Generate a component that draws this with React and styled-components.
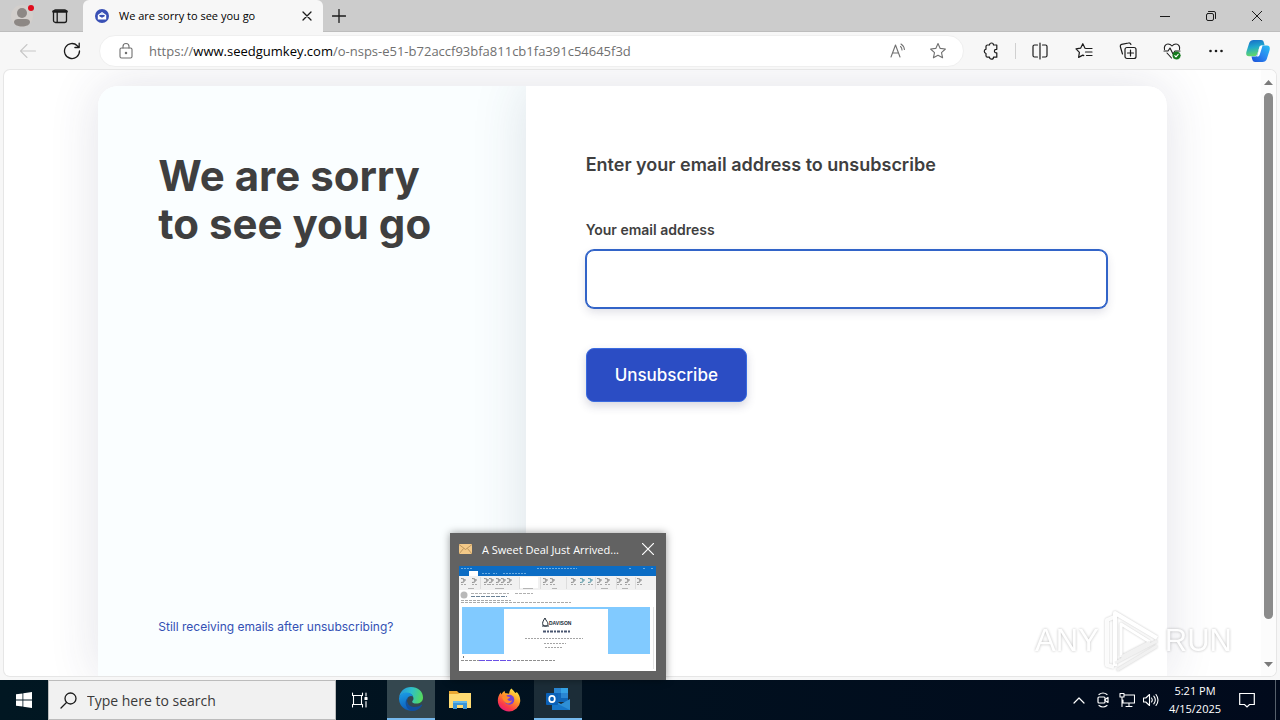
import React, { useState } from 'react';
import styled, { createGlobalStyle } from 'styled-components';

const GlobalStyle = createGlobalStyle`
  * {
    box-sizing: border-box;
  }

  body {
    margin: 0;
    overflow: hidden;
    font-family: 'Open Sans', 'Noto Sans', sans-serif;
    font-size: 12px;
    color: #1b1b1b;
  }

  button, input {
    font: inherit;
    color: inherit;
  }

  h1, h2 {
    margin: 0;
  }

  svg {
    display: block;
    flex: none;
  }
`;

const Desktop = styled.div`
  display: flex;
  flex-direction: column;
  height: 100vh;
  background: #f7f7f7;
`;

/* Browser chrome */

const PlainButton = styled.button`
  display: flex;
  align-items: center;
  justify-content: center;
  padding: 0;
  border: 0;
  background: transparent;
`;

const TabStrip = styled.header`
  display: flex;
  flex: none;
  height: 32px;
  background: #cccccc;
  box-shadow: inset 0 -1px 0 #bdbdbd;
`;

const ProfileButton = styled(PlainButton)`
  width: 44px;
`;

const StripButton = styled(PlainButton)`
  width: 32px;
`;

const Tab = styled.div`
  display: flex;
  align-items: center;
  width: 240px;
  margin-left: 7px;
  padding: 0 8px 0 12px;
  border-radius: 6px 6px 0 0;
  background: #f7f7f7;
`;

const TabTitle = styled.span`
  flex: 1;
  margin-left: 10px;
  font-size: 11px;
  line-height: 16px;
  color: #000000;
  white-space: nowrap;
`;

const CloseTab = styled(PlainButton)`
  width: 16px;
  height: 16px;
`;

const WindowControls = styled.div`
  display: flex;
  margin-left: auto;
`;

const WindowButton = styled(PlainButton)`
  width: 46px;
`;

const Toolbar = styled.nav`
  display: flex;
  flex: none;
  align-items: center;
  height: 38px;
  padding: 0 2px 0 6px;
`;

const ToolButton = styled(PlainButton)`
  width: ${(props) => props.$width || 44}px;
  height: 30px;
  color: ${(props) => (props.$disabled ? '#c8c8c8' : '#1b1b1b')};
`;

const AddressBar = styled.div`
  display: flex;
  flex: 1;
  align-items: center;
  height: 32px;
  margin: 0 5px;
  padding: 0 11px 0 17px;
  border: 1px solid #efefef;
  border-radius: 16px;
  background: #ffffff;
  color: #707070;
`;

const Url = styled.span`
  flex: 1;
  margin-left: 14px;
  font-size: 13px;
  line-height: 20px;
  white-space: nowrap;

  b {
    font-weight: 400;
    color: #000000;
  }
`;

const AddressAction = styled(PlainButton)`
  width: 28px;
  height: 28px;
  margin-left: 12px;
`;

const Divider = styled.div`
  width: 1px;
  height: 16px;
  margin: 0 2px;
  background: #d0d0d0;
`;

/* Web page */

const Viewport = styled.div`
  display: flex;
  flex: 1;
  min-height: 0;
  margin: 0 4px 4px;
  overflow: hidden;
  border-radius: 6px;
  background: #ffffff;
  box-shadow: 0 0 0 1px #e6e6e6;
`;

const Page = styled.main`
  display: flex;
  flex: 1;
  justify-content: center;
  min-width: 0;
  padding-top: 16px;
  overflow: hidden;
  font-family: Inter, sans-serif;
  color: #3f3f3f;
`;

const Card = styled.div`
  display: flex;
  flex: none;
  width: 85%;
  height: 100%;
  border-radius: 20px 20px 0 0;
  overflow: hidden;
  background: #ffffff;
  box-shadow: 0 0 50px rgba(50, 50, 93, 0.14);
`;

const Aside = styled.section`
  display: flex;
  flex-direction: column;
  justify-content: space-between;
  width: 40%;
  padding: 66px 60px 40px;
  background: #fafeff;
`;

const Title = styled.h1`
  font-size: 42px;
  font-weight: 700;
  line-height: 48px;
  white-space: nowrap;
`;

const HelpLink = styled.a`
  font-size: 12px;
  line-height: 18px;
  color: #3350b4;
  text-decoration: none;
`;

const FormPanel = styled.form`
  display: flex;
  flex: 1;
  flex-direction: column;
  align-items: flex-start;
  padding: 65px 60px 0;
  background: #ffffff;
  box-shadow: 0 0 50px rgba(50, 70, 93, 0.15);
`;

const FormTitle = styled.h2`
  font-size: 18px;
  font-weight: 600;
  line-height: 28px;
`;

const Label = styled.label`
  margin-top: 41px;
  font-size: 14px;
  font-weight: 600;
  line-height: 20px;
`;

const EmailInput = styled.input`
  width: 100%;
  height: 58px;
  margin-top: 10px;
  padding: 0 20px;
  border: 1px solid #3264c8;
  border-radius: 8px;
  outline: none;
  background: #ffffff;
  font-size: 18px;
  box-shadow: 0 0 0 1px #3264c8, 0 4px 10px rgba(50, 50, 93, 0.16);
`;

const SubmitButton = styled.button`
  height: 54px;
  margin-top: 40px;
  padding: 0 28px;
  border: 1px solid #3a6be0;
  border-radius: 8px;
  background: #2b4dc4;
  color: #ffffff;
  font-size: 17px;
  font-weight: 500;
  box-shadow: 0 4px 10px rgba(50, 50, 93, 0.2);
`;

const Scrollbar = styled.div`
  display: flex;
  flex-direction: column;
  align-items: center;
  width: 15px;
  padding: 9px 0 8px;
  background: #fcfcfc;
`;

const ScrollThumb = styled.div`
  flex: 1;
  width: 9px;
  margin: 7px 0 42px;
  border-radius: 5px;
  background: #8b8b8b;
`;

const Watermark = styled.div`
  position: absolute;
  right: 48px;
  bottom: 46px;
  display: flex;
  align-items: center;
  gap: 4px;
  color: #ffffff;
  font-family: 'Liberation Sans', sans-serif;
  font-size: 31px;
  line-height: 66px;
  text-shadow: 0 0 3px rgba(0, 0, 0, 0.3);
  opacity: 0.9;
  pointer-events: none;

  svg {
    filter: drop-shadow(0 0 1px rgba(0, 0, 0, 0.25));
  }
`;

/* Taskbar */

const Taskbar = styled.footer`
  display: flex;
  flex: none;
  height: 40px;
  background: linear-gradient(90deg, #011722, #010a1c);
  color: #ffffff;
`;

const SearchBox = styled.label`
  display: flex;
  align-items: center;
  width: 288px;
  padding: 0 11px;
  border: 1px solid #bcbcbc;
  background: #f1f1f1;
  color: #1b1b1b;
`;

const SearchInput = styled.input`
  flex: 1;
  min-width: 0;
  margin-left: 10px;
  padding: 0;
  border: 0;
  outline: none;
  background: transparent;
  font-size: 14px;

  &::placeholder {
    color: #3a3a3a;
    opacity: 1;
  }
`;

const Apps = styled.div`
  display: flex;
  gap: 1px;
  margin-left: 3px;
`;

const AppSlot = styled.div`
  position: relative;
  display: flex;
`;

const TaskButton = styled(PlainButton)`
  width: 48px;
  background: ${(props) => props.$fill || 'transparent'};
  border-bottom: ${(props) => (props.$fill ? '2px solid #76b9ed' : '0')};
`;

const Tray = styled.div`
  display: flex;
  align-items: center;
  margin-left: auto;
`;

const TrayButton = styled(PlainButton)`
  width: ${(props) => props.$width || 24}px;
  height: 100%;
`;

const Clock = styled.time`
  width: 56px;
  margin-left: 4px;
  font-size: 11px;
  line-height: 18px;
  text-align: center;
`;

const ShowDesktop = styled(PlainButton)`
  width: 5px;
  height: 100%;
  margin-left: 4px;
  border-left: 1px solid #56606c;
`;

/* Hover preview over the Outlook button */

const Preview = styled.div`
  position: absolute;
  bottom: 100%;
  left: 50%;
  width: 216px;
  padding: 0 10px 9px 9px;
  background: #626262;
  box-shadow: 0 0 8px rgba(0, 0, 0, 0.4);
  transform: translateX(-50%);
`;

const PreviewHeader = styled.div`
  display: flex;
  align-items: center;
  height: 33px;
  padding-bottom: 1px;
`;

const PreviewTitle = styled.span`
  flex: 1;
  margin-left: 10px;
  color: #ffffff;
  font-size: 11px;
  white-space: nowrap;
`;

const strokeProps = {
  fill: 'none',
  stroke: 'currentColor',
  strokeLinecap: 'round',
  strokeLinejoin: 'round',
};

const Icon = ({ size = 18, box = 18, width = 1.1, children }) => (
  <svg width={size} height={size} viewBox={`0 0 ${box} ${box}`} {...strokeProps} strokeWidth={width} aria-hidden="true">
    {children}
  </svg>
);

const STAR = 'M9 1.6l2.2 4.8 5.2.6-3.9 3.6 1.1 5.2L9 13.2l-4.6 2.6 1.1-5.2L1.6 7l5.2-.6z';

const ProfileIcon = () => (
  <svg width="24" height="26" viewBox="0 0 24 26" aria-hidden="true">
    <circle cx="12" cy="13" r="11" fill="#d3cfcc" />
    <circle cx="12" cy="10" r="5" fill="#8d8885" />
    <path d="M4 19c0-2 2-3 4-3h8c2 0 4 1 4 3 0 3-4 4.500-8 4.500S4 22 4 19z" fill="#8d8885" />
    <circle cx="21" cy="5" r="3" fill="#e00b1c" />
  </svg>
);

const WorkspaceIcon = () => (
  <Icon size={16} box={16} width={1.3}>
    <rect x="1.5" y="2" width="13" height="12.5" rx="2" />
    <path d="M1.5 3.5h13" strokeWidth="2.6" />
    <path d="M5.2 4v10" />
  </Icon>
);

const Favicon = () => (
  <svg width="14" height="14" viewBox="0 0 14 14" aria-hidden="true">
    <circle cx="7" cy="7" r="7" fill="#3950b5" />
    <path d="M2.800 6L7 3l4.200 3v4.600H2.800z" fill="#ffffff" />
    <path d="M4.300 6h5.400v1.300L7 8.800 4.300 7.300z" fill="#3950b5" />
    <path d="M4.800 5.600h4.400L7 4.200z" fill="#a9c6f2" />
  </svg>
);

const CopilotIcon = () => (
  <svg width="24" height="24" viewBox="0 0 24 24" aria-hidden="true">
    <defs>
      <linearGradient id="copilotA" x1="0" y1="0" x2="0.2" y2="1">
        <stop offset="0" stopColor="#1768c8" />
        <stop offset="0.5" stopColor="#20a8cc" />
        <stop offset="1" stopColor="#62d66a" />
      </linearGradient>
      <linearGradient id="copilotB" x1="1" y1="0" x2="0" y2="1">
        <stop offset="0" stopColor="#26c0f2" />
        <stop offset="0.5" stopColor="#2a86f0" />
        <stop offset="1" stopColor="#1b4fd6" />
      </linearGradient>
    </defs>
    <path d="M7.500 1H15c2 0 2.600 1.300 3 3l.6 2.200h-2.300c-1.800 0-2.700 1-3.200 2.700l-1.700 5.700c-.5 1.700-1.400 2.600-3 2.600H3c-2.800 0-3.200-2.200-2.500-4.800L3.200 4C3.900 2 5.500 1 7.500 1z" fill="url(#copilotA)" />
    <path d="M16.500 23H9.200c-1.800 0-2.600-1.200-3-2.800l-.7-2.600h2.800c1.800 0 2.700-1 3.200-2.700l1.700-5.700c.5-1.700 1.400-2.600 3-2.600H21c2.800 0 3.200 2.200 2.500 4.800L20.800 20c-.6 2-2.300 3-4.300 3z" fill="url(#copilotB)" />
    <path d="M13.200 8.600c.4-1.300 1.300-2 2.600-2h.8l-2.800 8.800c-.5 1.500-1.500 2.200-2.800 2.200h-1c1-.4 1.300-1.300 1.600-2.200z" fill="#ffffff" />
  </svg>
);

const EdgeIcon = () => (
  <svg width="24" height="24" viewBox="0 0 24 24" aria-hidden="true">
    <defs>
      <linearGradient id="edgeTop" x1="0" y1="0.3" x2="1" y2="0.5">
        <stop offset="0" stopColor="#2595dd" />
        <stop offset="0.5" stopColor="#2fc0c8" />
        <stop offset="1" stopColor="#55da5b" />
      </linearGradient>
      <linearGradient id="edgeLow" x1="0" y1="0" x2="0.3" y2="1">
        <stop offset="0" stopColor="#1ba0e8" />
        <stop offset="1" stopColor="#0d5cb8" />
      </linearGradient>
    </defs>
    <path d="M0 11C.6 4.600 5.600 0 12 0c7 0 12 4.700 12 10.400 0 4-3.100 6.200-6.500 6.200-3 0-4.300-.9-4.300-1.900 0-.8 1.300-1.300 1.300-3.100C14.500 8.300 11.500 6 8 6c-4 0-7 2.200-8 5z" fill="url(#edgeTop)" />
    <path d="M0 11c1-3.400 3.700-5.600 7.500-5.600 3.300 0 5.600 1.500 6.500 4-1.400-.8-3.100-.7-4.300.4-3.400 3.100-1.600 10.200 4.600 12.100 1.300.4 2.600.4 3.800.1A12 12 0 0 1 0 12z" fill="url(#edgeLow)" />
    <path d="M9.400 10c-3.200 4-.6 9.400 4.800 9.900 3 .3 5.900-.5 8.100-2.200.5-.3 1 .2.7.7A12 12 0 0 1 12.500 24C6.500 22 4.500 14 9.400 10z" fill="#124f9d" />
  </svg>
);

const ExplorerIcon = () => (
  <svg width="22" height="20" viewBox="0 0 22 20" aria-hidden="true">
    <path d="M0 1h8l2 2h12v15H0z" fill="#eaa832" />
    <path d="M0 4h9l2-1h11v15H0z" fill="#ffdb72" />
    <path d="M4 19v-8h14v8h-4v-4H8v4z" fill="#3b96d8" />
    <path d="M4 11h14v2H4z" fill="#64b9ea" />
  </svg>
);

const FirefoxIcon = () => (
  <svg width="24" height="24" viewBox="0 0 24 24" aria-hidden="true">
    <defs>
      <linearGradient id="foxBody" x1="0.8" y1="0" x2="0.2" y2="1">
        <stop offset="0" stopColor="#fff04a" />
        <stop offset="0.4" stopColor="#ff9a27" />
        <stop offset="0.75" stopColor="#fb3b48" />
        <stop offset="1" stopColor="#e31587" />
      </linearGradient>
    </defs>
    <path d="M14.500.5c1.400 1.800 3 3 3.800 4.600.8-.2 1.300-.7 1.500-1.100 2.300 2.500 3.700 5.800 3.400 9.400A11.200 11.200 0 0 1 12 23.500C5.600 23.500.8 18.700.8 12.600c0-3 1-5.900 3-8 .1.700.4 1.400.8 1.800.6-1.500 1.900-2.900 3-3.600-.1 1 .3 2 .9 2.500 1.900.1 3 .1 3.500.7.600-2.200.7-4.400 2.500-5.500z" fill="url(#foxBody)" />
    <circle cx="12.300" cy="11.800" r="5" fill="#7542d4" />
    <path d="M5 9c2-1.800 4.200-1.400 6-.2l2 .2c-.4 1.500-2 1.500-2.600 2.300.6 1.500 2.700 2.200 4.800 1-1 3-4.300 4-6.800 2.200C6.500 13.200 5.500 11 5 9z" fill="#ff8b2a" />
  </svg>
);

const OutlookIcon = () => (
  <svg width="24" height="22" viewBox="0 0 24 22" aria-hidden="true">
    <path d="M8 0h14v14H8z" fill="#1066b8" />
    <path d="M8 0h7v5H8zM15 5h7v5h-7z" fill="#2a86d2" />
    <path d="M15 0h7v5h-7z" fill="#35a2e5" />
    <path d="M6 11l9 5 9-5v11H6z" fill="#2e8fd6" />
    <path d="M6 22V13l18 9z" fill="#1777ca" />
    <rect y="5" width="12" height="12" rx="1" fill="#0a61b8" />
    <ellipse cx="6" cy="11" rx="2.800" ry="3.200" fill="none" stroke="#ffffff" strokeWidth="1.700" />
  </svg>
);

const PlayLogo = () => (
  <svg width="58" height="64" viewBox="0 0 58 64" fill="none" stroke="#ffffff" strokeLinejoin="round" aria-hidden="true">
    <path d="M11 8L4 11v45l7 2" strokeWidth="4" opacity="0.9" />
    <path d="M12 57V4l42 25" strokeWidth="4" />
    <path d="M18 48V15l29 18" strokeWidth="3" />
    <path d="M54 32L12 54M47 33L18 48M54 37L14 61" stroke="#f0f0f0" strokeWidth="3" />
  </svg>
);

const ribbonGroups = [2, 13, 25, 30, 37, 42, 48, 84, 91, 112, 121, 129, 138, 146, 158, 166, 178];

const MailThumbnail = () => (
  <svg width="197" height="105" viewBox="0 0 197 105" role="img" aria-label="Outlook message window">
    <rect width="197" height="105" fill="#ffffff" />
    <rect width="197" height="10" fill="#0b6cc4" />
    <rect x="10" y="5" width="9" height="5" fill="#ffffff" />
    <path d="M2 2.5h12M78 2.5h40M170 2.5h3M184 2.5h2M192 2.5h2M23 7.5h8M34 7.5h4M44 7.5h24" stroke="#6aacE2" strokeWidth="1" strokeDasharray="2 1" />
    <rect y="10" width="197" height="14" fill="#f1f1f1" />
    <rect x="61" y="11" width="18" height="11" fill="#ffffff" />
    {ribbonGroups.map((x) => (
      <g key={x}>
        <path d={`M${x} 12.500l3 .5v3l-3 .5M${x + 2} 14h3`} fill="none" stroke={x > 110 && x % 2 ? '#5b9aa8' : '#8c8c8c'} strokeWidth="1" />
        <path d={`M${x} 18.5h6`} stroke="#a9a9a9" strokeWidth="1" strokeDasharray="2 1" />
      </g>
    ))}
    <path d="M9 22.5h6M36 22.5h9M64 22.5h10M93 22.5h5M142 22.5h7M163 22.5h6" stroke="#b5b5b5" strokeWidth="1" />
    <path d="M21.5 11v12M60.5 11v12M81.5 11v12M107.5 11v12M136.5 11v12M157.5 11v12M176.5 11v12" stroke="#dddddd" />
    <circle cx="5" cy="29" r="3.500" fill="#b9b9b9" />
    <path d="M12 27.5h38M56 27.5h18" stroke="#b0b0b0" strokeDasharray="3 1" />
    <path d="M12 30.5h36" stroke="#6a8296" strokeDasharray="4 1" />
    <path d="M2 34.5h50M2 36.5h110" stroke="#a9a9a9" strokeDasharray="3 1" />
    <rect x="3" y="41" width="188" height="47" fill="#81caff" />
    <rect x="45" y="43" width="104" height="45" fill="#ffffff" />
    <path d="M86 52c-2 3-3 5-2 7 2 2 5 1 5-1 0-2-2-3-3-6zM83 60h7" fill="none" stroke="#202b36" />
    <text x="90" y="59" fontFamily="Liberation Sans" fontSize="5" fontWeight="700" fill="#202b36">DAVISON</text>
    <path d="M84 65.5h27" stroke="#4a5670" strokeWidth="2" strokeDasharray="3 1 2 1" />
    <path d="M66 72.500h58M85 77.5h22M86 81.5h18" stroke="#a4a4a4" strokeDasharray="2 1" />
    <path d="M2 94.5h18M54 94.5h42" stroke="#8f8f8f" strokeDasharray="3 1" />
    <path d="M20 94.5h32" stroke="#6a50e6" strokeDasharray="6 1" />
    <path d="M4.5 90v2" stroke="#777777" />
    <path d="M194.5 41v62" stroke="#e4e4e4" />
  </svg>
);

const App = () => {
  const [email, setEmail] = useState('');

  const handleSubmit = (e) => {
    e.preventDefault();
  };

  return (
    <Desktop>
      <GlobalStyle />

      <TabStrip>
        <ProfileButton aria-label="Profile"><ProfileIcon /></ProfileButton>
        <StripButton aria-label="Workspaces"><WorkspaceIcon /></StripButton>
        <Tab>
          <Favicon />
          <TabTitle>We are sorry to see you go</TabTitle>
          <CloseTab aria-label="Close tab">
            <Icon size={10} box={10} width={1.3}><path d="M1 1l8 8M9 1L1 9" /></Icon>
          </CloseTab>
        </Tab>
        <StripButton aria-label="New tab">
          <Icon size={14} box={14} width={1.3}><path d="M7 .5v13M.5 7h13" /></Icon>
        </StripButton>
        <WindowControls>
          <WindowButton aria-label="Minimize">
            <Icon size={10} box={10} width={1}><path d="M0 5.5h10" /></Icon>
          </WindowButton>
          <WindowButton aria-label="Restore">
            <Icon size={10} box={10} width={1}>
              <rect x=".5" y="2.5" width="7" height="7" rx="1.5" />
              <path d="M2.5.5H8A1.5 1.5 0 0 1 9.5 2v5.5" />
            </Icon>
          </WindowButton>
          <WindowButton aria-label="Close">
            <Icon size={10} box={10} width={1}><path d="M0 0l10 10M10 0L0 10" /></Icon>
          </WindowButton>
        </WindowControls>
      </TabStrip>

      <Toolbar>
        <ToolButton $disabled aria-label="Back">
          <Icon><path d="M16.5 9H1.5M8 2.5L1.5 9 8 15.5" /></Icon>
        </ToolButton>
        <ToolButton aria-label="Refresh">
          <Icon width={1.3}><path d="M16.5 9a7.5 7.5 0 1 1-2.2-5.300L16 5.300M16.200 1.200v4.300h-4.300" /></Icon>
        </ToolButton>
        <AddressBar>
          <Icon>
            <rect x="3" y="6" width="12" height="10" rx="1.5" />
            <path d="M6 6V4.500a3 3 0 0 1 6 0V6" />
            <circle cx="9" cy="11" r=".7" fill="currentColor" />
          </Icon>
          <Url>https://<b>www.seedgumkey.com</b>/o-nsps-e51-b72accf93bfa811cb1fa391c54645f3d</Url>
          <AddressAction aria-label="Read aloud">
            <Icon>
              <path d="M2 15L6.500 3 11 15M3.600 11h5.800M11.500 4.500c1 .8 1.500 2 1.500 3.500M12 2c2 1.300 3.200 3 3.400 5.500" />
            </Icon>
          </AddressAction>
          <AddressAction aria-label="Add to favorites">
            <Icon><path d={STAR} /></Icon>
          </AddressAction>
        </AddressBar>
        <ToolButton aria-label="Extensions">
          <Icon width={1.2}>
            <path d="M5.500 3h2a2 2 0 0 1 4 0h3.300v4.300h-.6a1.800 1.800 0 0 0 0 3.600h.6v4.300h-3.300a2 2 0 0 1-4 0h-2A1.500 1.500 0 0 1 4 13.700V11.500a2.200 2.200 0 0 1 0-4.300V4.500A1.500 1.500 0 0 1 5.500 3z" />
          </Icon>
        </ToolButton>
        <Divider />
        <ToolButton aria-label="Split screen">
          <Icon width={1.2}>
            <path d="M9 1v16M6.500 3h-3A1.500 1.500 0 0 0 2 4.500v9A1.500 1.500 0 0 0 3.500 15h3M11.500 3h3A1.500 1.500 0 0 1 16 4.500v9a1.500 1.500 0 0 1-1.500 1.500h-3" />
          </Icon>
        </ToolButton>
        <ToolButton aria-label="Favorites">
          <Icon width={1.2}>
            <path d="M11 6.500L10 6.200 7.800 1.700 5.600 6.200 1 6.900l3.400 3.500-.8 5 4.200-2.300 1 .5M11 6.500h6M10.500 10H17M11.500 13.500H17" />
          </Icon>
        </ToolButton>
        <ToolButton aria-label="Collections">
          <Icon width={1.2}>
            <rect x="6" y="5.5" width="11" height="11" rx="2" />
            <path d="M11.500 8v6M8.500 11h6M3.500 12L1.300 4.500A1.800 1.800 0 0 1 2.600 2.400L9.500 1a2 2 0 0 1 2.400 1.500" />
          </Icon>
        </ToolButton>
        <ToolButton aria-label="Browser essentials">
          <Icon width={1.1}>
            <path d="M1.500 7.500C.8 4.500 2.500 2 5 2c1.800 0 3 .8 4 2 1-1.200 2.200-2 4-2 2.500 0 4.200 2.500 3.500 5.500M4 11l4.500 5M1 9h4l2-3 3 6 2-3h5" />
            <circle cx="13.500" cy="13.500" r="3.800" fill="#147a1d" stroke="#147a1d" strokeWidth=".4" />
            <path d="M11.800 13.700l1.200 1.200 2.200-2.500" stroke="#ffffff" />
          </Icon>
        </ToolButton>
        <ToolButton aria-label="Settings and more">
          <Icon>
            <g fill="currentColor" stroke="none">
              <circle cx="3.500" cy="9" r="1.300" />
              <circle cx="9" cy="9" r="1.300" />
              <circle cx="14.500" cy="9" r="1.300" />
            </g>
          </Icon>
        </ToolButton>
        <ToolButton $width={40} aria-label="Copilot"><CopilotIcon /></ToolButton>
      </Toolbar>

      <Viewport>
        <Page>
          <Card>
            <Aside>
              <Title>We are sorry<br />to see you go</Title>
              <HelpLink href="#help">Still receiving emails after unsubscribing?</HelpLink>
            </Aside>
            <FormPanel onSubmit={handleSubmit}>
              <FormTitle>Enter your email address to unsubscribe</FormTitle>
              <Label htmlFor="email">Your email address</Label>
              <EmailInput id="email" type="email" value={email} onChange={(e) => setEmail(e.target.value)} />
              <SubmitButton type="submit">Unsubscribe</SubmitButton>
            </FormPanel>
          </Card>
        </Page>
        <Scrollbar>
          <svg width="9" height="7" viewBox="0 0 9 7" aria-hidden="true"><path d="M0 6l4.500-5L9 6z" fill="#7a7a7a" /></svg>
          <ScrollThumb />
          <svg width="9" height="7" viewBox="0 0 9 7" aria-hidden="true"><path d="M0 1l4.500 5L9 1z" fill="#7a7a7a" /></svg>
        </Scrollbar>
      </Viewport>

      <Watermark>
        <span>ANY</span>
        <PlayLogo />
        <span>RUN</span>
      </Watermark>

      <Taskbar>
        <TaskButton aria-label="Start">
          <svg width="16" height="16" viewBox="0 0 16 16" fill="#ffffff" aria-hidden="true">
            <path d="M0 2.300l6.500-.9v6.200H0zM7.300 1.300L16 0v7.600H7.300zM0 8.400h6.500v6.200L0 13.700zM7.300 8.400H16V16l-8.700-1.300z" />
          </svg>
        </TaskButton>
        <SearchBox>
          <Icon size={17} box={17} width={1.3}><circle cx="10.500" cy="6.500" r="5.500" /><path d="M6.500 10.500L1 16" /></Icon>
          <SearchInput type="text" placeholder="Type here to search" aria-label="Type here to search" />
        </SearchBox>
        <TaskButton aria-label="Task view">
          <Icon size={16} box={16} width={1.1}>
            <path d="M.5 1v2.500h10V1M.5 15v-2.500h10V15M1.500 3.500v9M9.500 3.500v9M14 1v3M14 9.500V15" />
            <rect x="13" y="5.5" width="2" height="2" fill="currentColor" />
          </Icon>
        </TaskButton>
        <Apps>
          <TaskButton $fill="#34474f" aria-label="Microsoft Edge"><EdgeIcon /></TaskButton>
          <TaskButton aria-label="File Explorer"><ExplorerIcon /></TaskButton>
          <TaskButton aria-label="Firefox"><FirefoxIcon /></TaskButton>
          <AppSlot>
            <TaskButton $fill="#1c2d38" aria-label="Outlook"><OutlookIcon /></TaskButton>
            <Preview>
              <PreviewHeader>
                <svg width="13" height="10" viewBox="0 0 13 10" aria-hidden="true">
                  <rect width="13" height="10" fill="#f3c988" />
                  <path d="M0 .5l6.500 5L13 .5M0 10l4.500-5.500M13 10L8.500 4.500" fill="none" stroke="#b08a55" strokeWidth=".8" />
                </svg>
                <PreviewTitle>A Sweet Deal Just Arrived...</PreviewTitle>
                <CloseTab aria-label="Close window">
                  <svg width="12" height="12" viewBox="0 0 12 12" stroke="#ffffff" strokeWidth="1.200" aria-hidden="true"><path d="M0 0l12 12M12 0L0 12" /></svg>
                </CloseTab>
              </PreviewHeader>
              <MailThumbnail />
            </Preview>
          </AppSlot>
        </Apps>
        <Tray>
          <TrayButton aria-label="Show hidden icons">
            <Icon size={12} box={12} width={1.2}><path d="M1 9l5-5 5 5" /></Icon>
          </TrayButton>
          <TrayButton aria-label="Camera in use">
            <Icon size={16} box={16} width={1.2}>
              <rect x="3" y="5" width="7" height="6" rx="1" />
              <path d="M10 7.500l3-2v5l-3-2M4 2.500Q8-.5 12 2.500M4 13.500Q8 16.500 12 13.500" />
            </Icon>
          </TrayButton>
          <TrayButton aria-label="Network">
            <Icon size={16} box={16} width={1.1}>
              <path d="M5.500 3h10v8H4V8M7 14.500h6M10 11v3.500M1 1.500h4v3.500H1zM3 5v9.500" />
            </Icon>
          </TrayButton>
          <TrayButton aria-label="Volume">
            <Icon size={16} box={16} width={1.1}>
              <path d="M.5 6h2.300L6.500 2.500v11L2.800 10H.5zM8.500 6q1.500 2 0 4M10.800 4.200q3 3.800 0 7.600M13 2.500q4 5.500 0 11" />
            </Icon>
          </TrayButton>
          <Clock>5:21 PM<br />4/15/2025</Clock>
          <TrayButton $width={48} aria-label="Notifications">
            <Icon size={16} box={16} width={1.2}><path d="M.7 1.500h14.600v11h-4.800L8 15l-2.500-2.500H.7z" strokeLinejoin="miter" /></Icon>
          </TrayButton>
          <ShowDesktop aria-label="Show desktop" />
        </Tray>
      </Taskbar>
    </Desktop>
  );
};

export default App;
